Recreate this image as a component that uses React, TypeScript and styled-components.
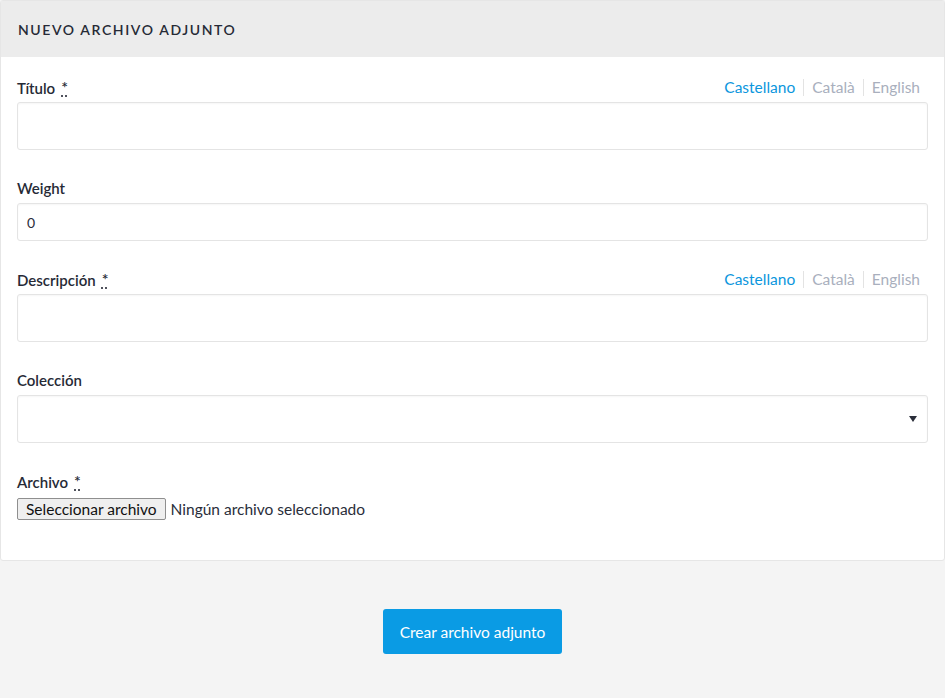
import React from "react";
import styled, { createGlobalStyle } from "styled-components";

const Global = createGlobalStyle`
  html, body { margin: 0; padding: 0; background: #f4f4f4; }
  body { font-family: "Lato", "Liberation Sans", sans-serif; color: #2a2e3a; }
  * { box-sizing: border-box; }
`;

const Page = styled.div`
  width: 945px;
  min-height: 698px;
  background: #f4f4f4;
`;

const Card = styled.section`
  width: 945px;
  background: #fff;
  border: 1px solid #e6e6e6;
  border-radius: 3px;
`;

const CardHeader = styled.header`
  height: 56px;
  background: #ececec;
  display: flex;
  align-items: center;
  padding: 0 17px;
`;

const Title = styled.h2`
  margin: 0;
  font-size: 14px;
  font-weight: 600;
  letter-spacing: 1.6px;
  text-transform: uppercase;
  color: #262a36;
`;

const CardBody = styled.div`
  padding: 21px 16px 40px 16px;
  display: flex;
  flex-direction: column;
  gap: 29px;
`;

const Group = styled.div`
  display: flex;
  flex-direction: column;
`;

const LabelRow = styled.div`
  display: flex;
  justify-content: space-between;
  align-items: flex-start;
  height: 24px;
`;

const Label = styled.label`
  font-size: 15px;
  line-height: 18px;
  font-weight: 600;
  color: #262a36;
`;

const Req = styled.abbr`
  margin-left: 6px;
  font-size: 16px;
  vertical-align: 1px;
  text-decoration: underline dotted;
  text-underline-offset: 3px;
  cursor: help;
`;

const Langs = styled.div`
  display: flex;
  align-items: center;
  padding-right: 8px;
  height: 18px;
`;

const Lang = styled.span<{ $active?: boolean }>`
  font-size: 15.5px;
  color: ${(p) => (p.$active ? "#0b96dd" : "#a9afbd")};
  padding: 0 8px;
  border-left: 1px solid #e3e3e3;
  line-height: 17px;
  &:first-child { border-left: none; }
  &:last-child { padding-right: 0; }
`;

const Input = styled.input<{ $tall?: boolean }>`
  width: 100%;
  height: ${(p) => (p.$tall ? "48px" : "38px")};
  border: 1px solid #e4e4e4;
  border-radius: 3px;
  box-shadow: inset 0 1px 2px rgba(0, 0, 0, 0.04);
  padding: 0 9px;
  font-family: "Lato", "Liberation Sans", sans-serif;
  font-size: 14px;
  color: #2a2e3a;
  background: #fff;
  outline: none;
`;

const SelectBox = styled.div`
  position: relative;
  height: 48px;
  border: 1px solid #e4e4e4;
  border-radius: 3px;
  box-shadow: inset 0 1px 2px rgba(0, 0, 0, 0.04);
  background: #fff;
`;

const Arrow = styled.span`
  position: absolute;
  right: 10px;
  top: 20px;
  width: 0;
  height: 0;
  border-left: 4px solid transparent;
  border-right: 4px solid transparent;
  border-top: 6px solid #2a2e3a;
`;

const FileRow = styled.div`
  display: flex;
  align-items: center;
  gap: 5px;
  margin-top: 2px;
`;

const FileButton = styled.button`
  height: 22px;
  padding: 0 8px;
  font-family: "Lato", "Liberation Sans", sans-serif;
  font-size: 15.5px;
  color: #111;
  background: #efefef;
  border: 1px solid #8f8f8f;
  border-radius: 2px;
`;

const FileText = styled.span`
  font-size: 15.5px;
  color: #2a2e3a;
`;

const Actions = styled.div`
  display: flex;
  justify-content: center;
  padding-top: 48px;
`;

const Submit = styled.button`
  width: 179px;
  height: 45px;
  background: #0a9be4;
  color: #fff;
  border: none;
  border-radius: 3px;
  font-family: "Lato", "Liberation Sans", sans-serif;
  font-size: 15.5px;
`;

const LangTabs = () => (
  <Langs>
    <Lang $active>Castellano</Lang>
    <Lang>Català</Lang>
    <Lang>English</Lang>
  </Langs>
);

export default function App() {
  return (
    <Page>
      <Global />
      <Card>
        <CardHeader>
          <Title>Nuevo archivo adjunto</Title>
        </CardHeader>
        <CardBody>
          <Group>
            <LabelRow>
              <Label>
                Título<Req title="required">*</Req>
              </Label>
              <LangTabs />
            </LabelRow>
            <Input $tall />
          </Group>
          <Group>
            <LabelRow>
              <Label>Weight</Label>
            </LabelRow>
            <Input defaultValue="0" />
          </Group>
          <Group>
            <LabelRow>
              <Label>
                Descripción<Req title="required">*</Req>
              </Label>
              <LangTabs />
            </LabelRow>
            <Input $tall />
          </Group>
          <Group>
            <LabelRow>
              <Label>Colección</Label>
            </LabelRow>
            <SelectBox>
              <Arrow />
            </SelectBox>
          </Group>
          <Group>
            <LabelRow>
              <Label>
                Archivo<Req title="required">*</Req>
              </Label>
            </LabelRow>
            <FileRow>
              <FileButton>Seleccionar archivo</FileButton>
              <FileText>Ningún archivo seleccionado</FileText>
            </FileRow>
          </Group>
        </CardBody>
      </Card>
      <Actions>
        <Submit>Crear archivo adjunto</Submit>
      </Actions>
    </Page>
  );
}
